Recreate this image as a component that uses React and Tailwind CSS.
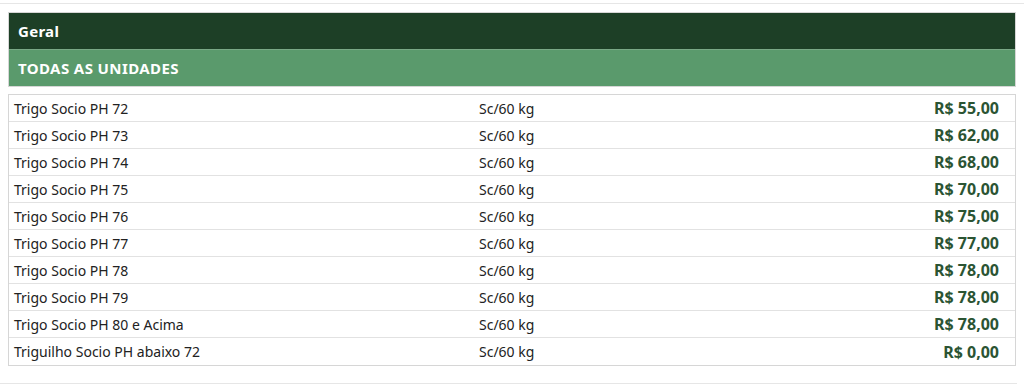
import React from 'react';

const rows = [
  { name: 'Trigo Socio PH 72', unit: 'Sc/60 kg', price: 'R$ 55,00' },
  { name: 'Trigo Socio PH 73', unit: 'Sc/60 kg', price: 'R$ 62,00' },
  { name: 'Trigo Socio PH 74', unit: 'Sc/60 kg', price: 'R$ 68,00' },
  { name: 'Trigo Socio PH 75', unit: 'Sc/60 kg', price: 'R$ 70,00' },
  { name: 'Trigo Socio PH 76', unit: 'Sc/60 kg', price: 'R$ 75,00' },
  { name: 'Trigo Socio PH 77', unit: 'Sc/60 kg', price: 'R$ 77,00' },
  { name: 'Trigo Socio PH 78', unit: 'Sc/60 kg', price: 'R$ 78,00' },
  { name: 'Trigo Socio PH 79', unit: 'Sc/60 kg', price: 'R$ 78,00' },
  { name: 'Trigo Socio PH 80 e Acima', unit: 'Sc/60 kg', price: 'R$ 78,00' },
  { name: 'Triguilho Socio PH abaixo 72', unit: 'Sc/60 kg', price: 'R$ 0,00' },
];

const PriceRow = ({ name, unit, price, last }) => (
  <div className={`grid grid-cols-[465px_1fr_auto] items-center h-[27px] pl-[5px] pr-[16px] ${last ? '' : 'border-b border-[#e2e2e2]'}`}>
    <span className="text-[#222]">{name}</span>
    <span className="text-[#222]">{unit}</span>
    <span className="font-bold text-[#2b5433] text-[16px] leading-none">{price}</span>
  </div>
);

export default function App() {
  return (
    <div className="bg-white w-[1024px] h-[389px] text-[14px]" style={{ fontFamily: '"Noto Sans", "DejaVu Sans", sans-serif' }}>
      <div className="h-[4px] border-b border-[#e6e6e6]" />
      <div className="pl-[8px] pr-[8px] pt-[8px] pb-[17px]">
        <div className="border border-[#d6d6d6]">
          <div className="h-[36px] bg-[#1d3f26] flex items-center px-[9px] text-white font-bold text-[15px] tracking-[0.3px]">
            Geral
          </div>
          <div className="h-[37px] bg-[#5a9a6c] border-t border-[#7aa886] flex items-center px-[9px] text-white font-bold text-[15px] tracking-[0.4px]">
            TODAS AS UNIDADES
          </div>
        </div>
        <div className="mt-[7px] border border-[#d6d6d6]">
          {rows.map((r, i) => (
            <PriceRow key={r.name} {...r} last={i === rows.length - 1} />
          ))}
        </div>
      </div>
      <div className="w-[1017px] border-t border-[#e6e6e6]" />
    </div>
  );
}
